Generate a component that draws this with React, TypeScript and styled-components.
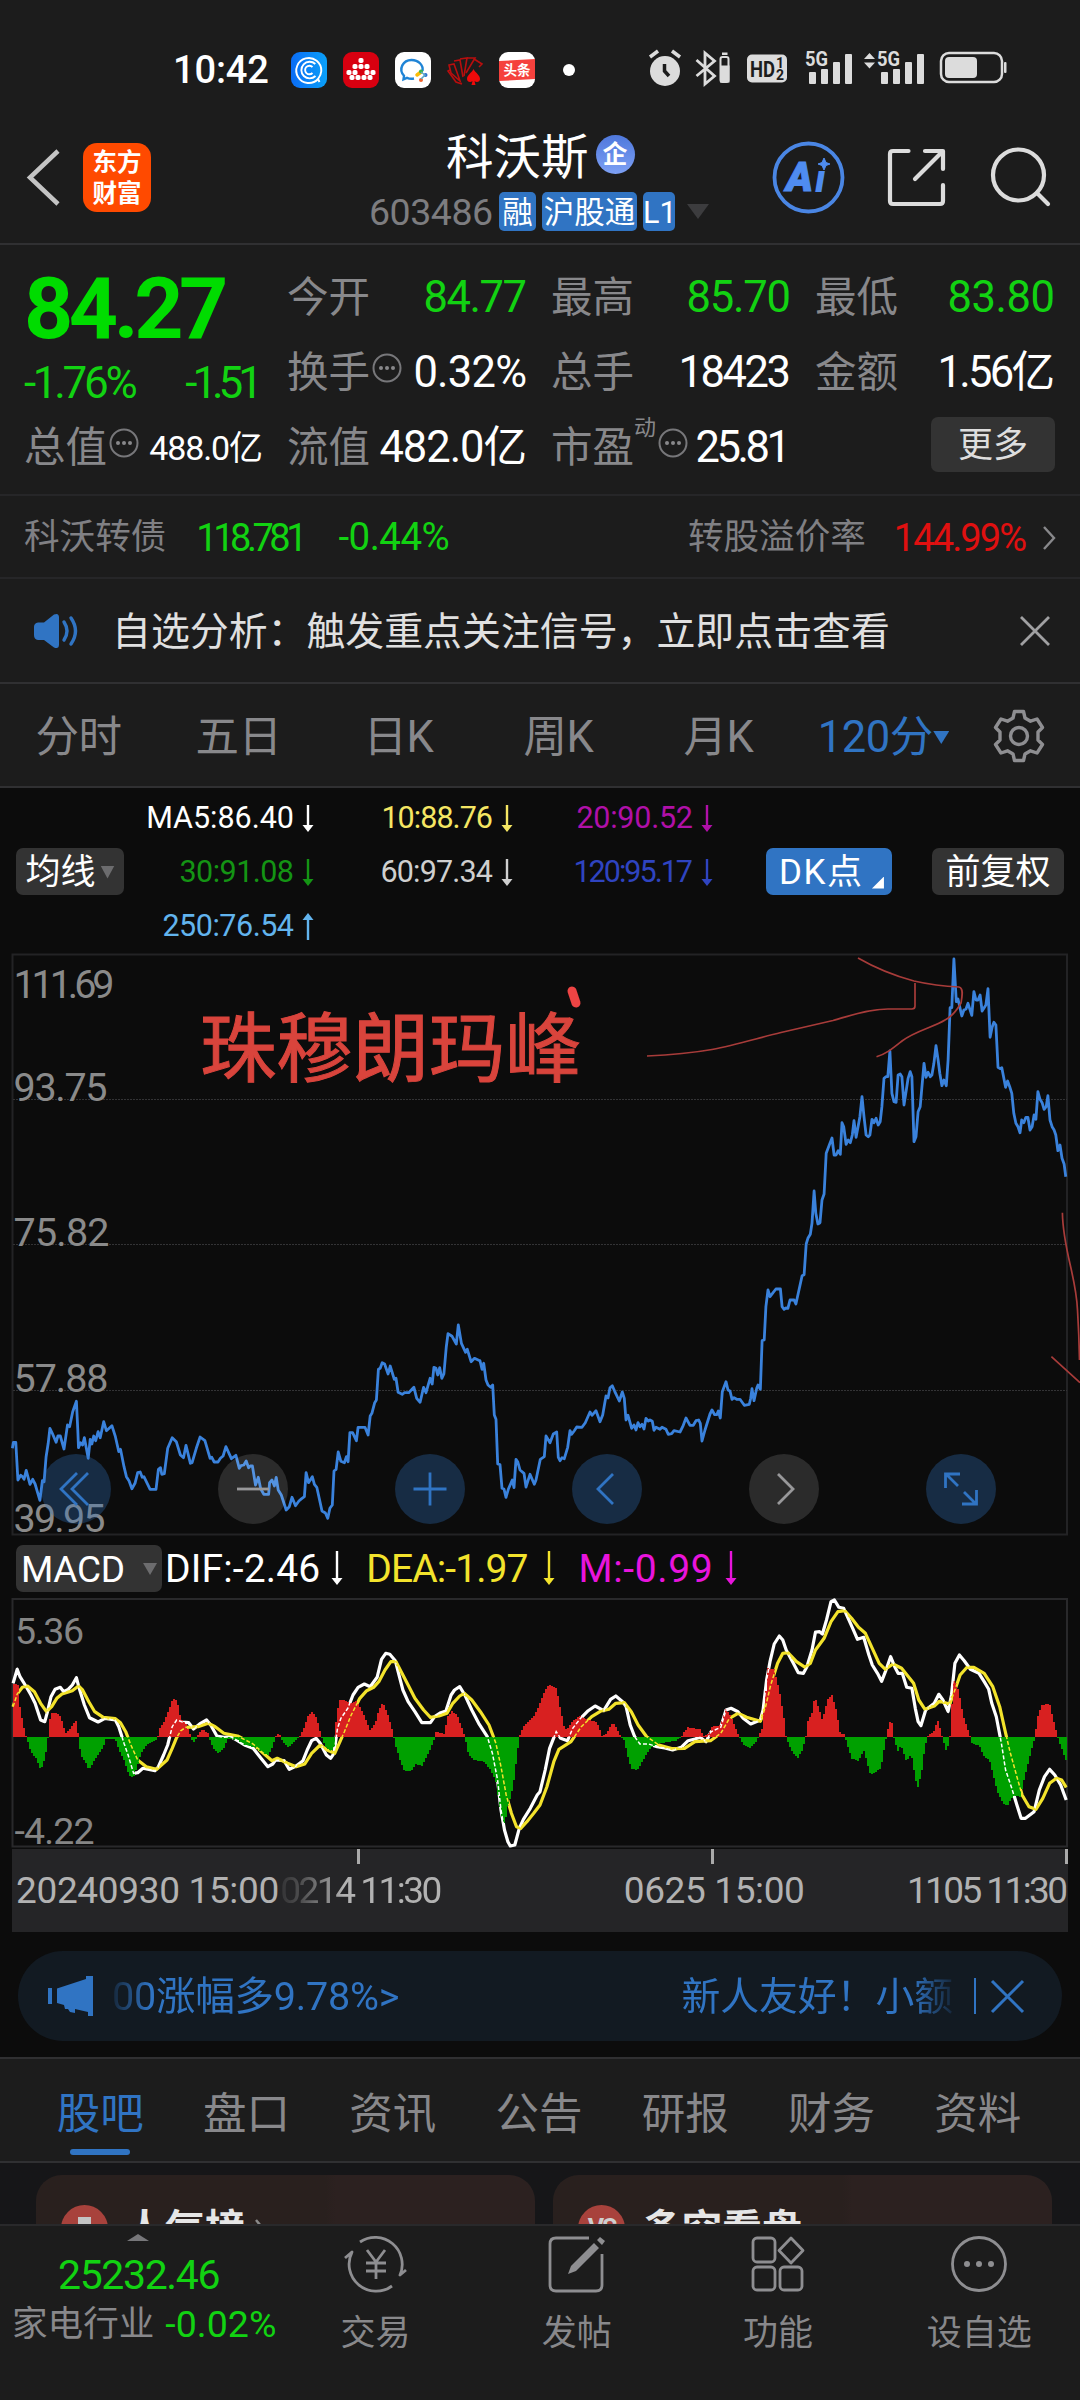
import React from "react";
import styled, { createGlobalStyle } from "styled-components";

const C = {
  bg: "#1c1c1c",
  deep: "#0c0c0c",
  line: "#303032",
  grey: "#88888b",
  blue: "#3074c3",
  green: "#12d212",
  red: "#e01010",
  chip: "#333333",
};

const FONT = `Roboto, "Noto Sans CJK SC", sans-serif`;

const Global = createGlobalStyle`
  * { box-sizing: border-box; }
  body { margin: 0; background: ${C.bg}; font-family: ${FONT}; line-height: 1; }
  svg { display: block; flex: none; overflow: visible; }
`;

/* Advance widths in em, used to track figures to a fixed column width. */
const ADV: Record<string, number> = {
  ".": 0.263, "-": 0.276, "%": 0.732, ":": 0.242, " ": 0.248, M: 0.8735, A: 0.652,
  D: 0.656, I: 0.272, F: 0.553, E: 0.568, C: 0.651, K: 0.627, L: 0.538, ">": 0.522,
};
const natural = (s: string) =>
  [...s].reduce((n, ch) => n + (ch > "\u2e80" ? 1 : ADV[ch] ?? 0.5615), 0);
const track = (s: string, size: number, width: number) =>
  s.length > 1 ? (width + size * 0.08 - natural(s) * size) / (s.length - 1) : 0;

const Tracked = styled.span<{ $size: number; $ls: number; $color: string; $weight: number }>`
  display: block;
  flex: none;
  white-space: nowrap;
  font-size: ${(p) => p.$size}px;
  font-weight: ${(p) => p.$weight};
  color: ${(p) => p.$color};
  letter-spacing: ${(p) => p.$ls}px;
  margin-right: ${(p) => -p.$ls}px;
`;
const Num = ({ t, size, w, color = "#fff", weight = 400 }: { t: string; size: number; w: number; color?: string; weight?: number }) => (
  <Tracked $size={size} $ls={track(t, size, w)} $color={color} $weight={weight}>{t}</Tracked>
);

const Page = styled.main`
  width: 1080px;
  height: 2400px;
  overflow: hidden;
  display: flex;
  flex-direction: column;
  background: ${C.deep};
`;

/* ---------- status bar ---------- */
const StatusBar = styled.div`
  height: 138px;
  display: flex;
  align-items: center;
  padding: 2px 73px 0 173px;
  background: ${C.bg};
`;
const AppIcons = styled.div`
  display: flex;
  gap: 16px;
  margin-left: 22px;
  align-items: center;
`;
const Tray = styled.div`
  margin-left: auto;
`;

const StatusIcons = () => (
  <AppIcons>
    <svg width="36" height="36" viewBox="0 0 36 36">
      <defs><linearGradient id="cq"><stop offset="0" stopColor="#0a6cf5" /><stop offset="1" stopColor="#0aa0f8" /></linearGradient></defs>
      <rect width="36" height="36" rx="9" fill="url(#cq)" />
      <g fill="none" stroke="#fff" strokeWidth="1.9">
        <path d="M27 27A12.5 12.5 0 1 1 30.3 19c-.1 3-1.5 5.500-3.300 8l1.500 3" />
        <path d="M24.500 24A8.300 8.300 0 1 1 24.300 12" />
        <path d="M21.500 21A4.300 4.300 0 1 1 21.500 15" />
      </g>
    </svg>
    <svg width="36" height="36" viewBox="0 0 36 36">
      <rect width="36" height="36" rx="9" fill="#d80010" />
      <g fill="#fff">
        {[[15.500, 6], [9.500, 12], [21.500, 12], [15.500, 12], [3.500, 18], [9.500, 18], [21.500, 18], [27.500, 18], [6.500, 24], [12.500, 24], [18.500, 24], [24.500, 24]].map(([x, y], i) => (
          <rect key={i} x={x} y={y - (y === 24 ? 1 : 0)} width="5" height="5" rx="1.800" />
        ))}
      </g>
    </svg>
    <svg width="36" height="36" viewBox="0 0 36 36">
      <rect width="36" height="36" rx="9" fill="#fff" />
      <path d="M19 26.500c-3 .6-5.500 0-7-.7l-3.500 1.500.5-3.500C3 17 8 8 16.500 8c7 0 12 5 11 11" fill="none" stroke="#1f84d6" strokeWidth="2.400" />
      <path d="M22 23l4-3" stroke="#fbbc08" strokeWidth="3.500" strokeLinecap="round" />
      <circle cx="26" cy="19.500" r="2" fill="#3bb44a" /><circle cx="30.500" cy="23" r="2" fill="#2a6fd0" />
      <circle cx="26" cy="28" r="2" fill="#f0602a" /><path d="M26 20l4 3-4 4" fill="none" stroke="#58a8c8" strokeWidth="1.500" />
    </svg>
    <svg width="36" height="36" viewBox="0 0 36 36">
      <g fill="none" stroke="#b80e0e" strokeWidth="1.600">
        <path d="M3 18l-2 1 8 11 6 2" /><path d="M2 13l5-1 5 14 1 3-9-8z" /><path d="M7 9l6-1 3 17" /><path d="M13 7l7-1-3 18" /><path d="M20 6l8 0-9 15" /><path d="M27 7l8 5-3 3" />
      </g>
      <path d="M26.500 17c2 4 6.500 6 6.500 10 0 3-3.500 4-5.500 2l1 4h-4l1-4c-2 2-5.500 1-5.500-2 0-4 4.500-6 6.500-10z" fill="#f00a0a" />
    </svg>
    <svg width="36" height="36" viewBox="0 0 36 36">
      <rect width="36" height="36" rx="9" fill="#fff" />
      <path d="M0 9L36 7V27L0 29z" fill="#f5413d" />
      <text x="4.500" y="23" fontSize="13.500" fontWeight="700" fill="#fff" fontFamily={FONT}>头条</text>
    </svg>
    <svg width="36" height="36" viewBox="0 0 36 36"><circle cx="18" cy="18" r="6" fill="#fff" /></svg>
  </AppIcons>
);

const Signal = ({ x }: { x: number }) => (
  <g transform={`translate(${x} 0)`}>
    <text x="-1" y="16" fontSize="20" fontWeight="700" textLength="23" lengthAdjust="spacingAndGlyphs" fontFamily={FONT}>5G</text>
    <rect x="3" y="22" width="7" height="12" rx="1" /><rect x="15" y="19" width="7" height="15" rx="1" />
    <rect x="27" y="12" width="7" height="22" rx="1" /><rect x="39" y="4" width="7" height="30" rx="1" />
  </g>
);
const TrayIcons = () => (
  <svg width="360" height="40" viewBox="647 0 360 40" fill="#dcdcdc">
    <circle cx="665" cy="21" r="15" />
    <path d="M650 7l8-6M680 7l-8-6" stroke="#dcdcdc" strokeWidth="3.500" />
    <path d="M664.500 14v7l4.500 5" fill="none" stroke="#1c1c1c" strokeWidth="3.500" />
    <path d="M696.500 10l18 16-9.500 8V3l9.500 8-18 15" fill="none" stroke="#dcdcdc" strokeWidth="2.800" />
    <rect x="720.500" y="7" width="8" height="25" rx="2" fill="none" stroke="#dcdcdc" strokeWidth="2" />
    <rect x="720" y="15.500" width="9.500" height="17" /><rect x="722" y="2.500" width="5.500" height="2.500" />
    <rect x="747" y="4.500" width="40" height="28" rx="5" />
    <g fill="#1c1c1c" fontFamily={FONT} fontWeight="700">
      <text x="750" y="26.500" fontSize="22" textLength="25" lengthAdjust="spacingAndGlyphs">HD</text>
      <text x="776" y="17.500" fontSize="14">1</text><text x="776" y="29.500" fontSize="14">2</text>
    </g>
    <Signal x={806} />
    <path d="M864 9l5.500-6 5.500 6zM864 12.500l5.500 6 5.500-6z" />
    <Signal x={878} />
    <rect x="941" y="3" width="61" height="29" rx="8" fill="none" stroke="#dcdcdc" strokeWidth="2.500" />
    <rect x="945" y="7" width="32" height="21" rx="4" /><rect x="1004" y="12" width="2.500" height="11" rx="1" />
  </svg>
);

/* ---------- title bar ---------- */
const TitleBar = styled.header`
  height: 107px;
  display: flex;
  background: ${C.bg};
  border-bottom: 2px solid ${C.line};
  padding: 0 28px 0 26px;
`;
const Lead = styled.div`
  width: 343px;
  display: flex;
  gap: 23px;
  padding-top: 5px;
`;
const BackArrow = styled.svg`
  margin-top: 5px;
`;
const Logo = styled.div`
  width: 68px;
  height: 69px;
  border-radius: 14px;
  background: #ff4a00;
  color: #fff;
  font-size: 24.5px;
  font-weight: 700;
  line-height: 31px;
  padding-top: 4px;
  text-align: center;
`;
const StockId = styled.div`
  width: 340px;
  display: flex;
  flex-direction: column;
`;
const StockName = styled.h1`
  margin: 0;
  padding: 3px 0 0 77px;
  height: 39px;
  display: flex;
  align-items: center;
  gap: 7px;
  font-size: 47.5px;
  font-weight: 400;
  color: #fff;
`;
const CorpBadge = styled.span`
  width: 39px;
  height: 39px;
  border-radius: 50%;
  background: linear-gradient(#4f78dc, #7da0f4);
  font-size: 25px;
  font-weight: 700;
  display: flex;
  align-items: center;
  justify-content: center;
  margin-top: -9px;
`;
const CodeRow = styled.div`
  display: flex;
  align-items: center;
  gap: 6px;
  margin-top: 15px;
  height: 39px;
`;
const Code = styled.div`
  padding-top: 3px;
`;
const Tag = styled.span<{ $w: number }>`
  width: ${(p) => p.$w}px;
  height: 39px;
  border-radius: 5px;
  background: ${C.blue};
  color: #fff;
  font-size: 30.5px;
  line-height: 41px;
  text-align: center;
  white-space: nowrap;
`;
const Caret = styled.span<{ $w: number; $h: number; $c: string }>`
  display: block;
  flex: none;
  width: ${(p) => p.$w}px;
  height: ${(p) => p.$h}px;
  background: ${(p) => p.$c};
  clip-path: polygon(0 0, 100% 0, 50% 100%);
`;
const HeadTools = styled.div`
  margin-left: auto;
`;

/* ---------- quote grid ---------- */
const Quote = styled.section`
  height: 251px;
  padding: 15px 24px 0 24px;
  display: grid;
  grid-template-columns: 239px 240px 240px 240px;
  grid-auto-rows: 75px;
  column-gap: 24px;
  background: ${C.bg};
  border-bottom: 2px solid #262628;
`;
const PriceBlock = styled.div`
  grid-row: span 2;
  display: flex;
  flex-direction: column;
  justify-content: flex-start;
  padding-top: 6px;
`;
const Change = styled.div`
  display: flex;
  justify-content: space-between;
  margin-top: 9px;
`;
const Cell = styled.div`
  display: flex;
  align-items: center;
`;
const Label = styled.span<{ $sup?: boolean }>`
  font-size: ${(p) => (p.$sup ? 22 : 41.5)}px;
  color: ${C.grey};
  white-space: nowrap;
  align-self: ${(p) => (p.$sup ? "flex-start" : "auto")};
  margin-top: ${(p) => (p.$sup ? 7 : 1)}px;
`;
const Push = styled.span`
  margin-left: auto;
`;
const MoreButton = styled.button`
  margin: 0 0 6px auto;
  width: 124px;
  height: 55px;
  padding: 2px 0 0;
  border: 0;
  border-radius: 7px;
  background: ${C.chip};
  color: #dedede;
  font: 35px/1 ${FONT};
`;
const Hint = () => (
  <svg width="32" height="40" viewBox="0 0 32 40">
    <circle cx="17" cy="15" r="13.500" fill="none" stroke="#77777a" strokeWidth="2" />
    <g fill="#88888b"><circle cx="11" cy="15" r="2" /><circle cx="17" cy="15" r="2" /><circle cx="23" cy="15" r="2" /></g>
  </svg>
);

/* ---------- bond / notice / periods ---------- */
const Bond = styled.section`
  height: 83px;
  padding: 2px 24px 0 24px;
  display: flex;
  align-items: center;
  background: ${C.bg};
  border-bottom: 2px solid #262628;
`;
const BondLabel = styled.span`
  font-size: 35.6px;
  color: #808084;
`;
const Gap = styled.span<{ $w: number }>`
  flex: none;
  width: ${(p) => p.$w}px;
`;
const Notice = styled.section`
  height: 105px;
  padding: 0 30px 0 33px;
  display: flex;
  align-items: center;
  background: ${C.bg};
  border-bottom: 2px solid ${C.line};
`;
const NoticeText = styled.p`
  margin: 3px 0 0 33px;
  font-size: 38.9px;
  color: #e0e0e0;
  flex: 1;
`;
const Periods = styled.nav`
  height: 104px;
  display: flex;
  align-items: center;
  padding-top: 1px;
  background: ${C.bg};
  border-bottom: 2px solid ${C.line};
`;
const Period = styled.span<{ $on?: boolean }>`
  width: 160px;
  display: flex;
  align-items: center;
  justify-content: center;
  gap: ${(p) => (p.$on ? 0 : 7)}px;
  padding: 4px ${(p) => (p.$on ? 0 : 3)}px 0 ${(p) => (p.$on ? 7 : 0)}px;
  font-size: 43.5px;
  letter-spacing: -0.5px;
  color: ${(p) => (p.$on ? C.blue : C.grey)};
`;

/* ---------- indicator header ---------- */
const Indicators = styled.section`
  height: 165px;
  display: flex;
  align-items: center;
  padding: 1px 16px 0;
`;
const Chip = styled.button<{ $w: number; $blue?: boolean }>`
  flex: none;
  width: ${(p) => p.$w}px;
  height: 47px;
  padding: 2px 0 0;
  border: 0;
  border-radius: 7px;
  background: ${(p) => (p.$blue ? C.blue : C.chip)};
  color: #fff;
  font: 35px/1 ${FONT};
  display: flex;
  align-items: center;
  justify-content: center;
  gap: 5px;
`;
const Corner = styled.span`
  width: 12px;
  height: 12px;
  background: #fff;
  clip-path: polygon(100% 0, 100% 100%, 0 100%);
  align-self: flex-end;
  margin: 0 0 6px 5px;
`;
const MaGrid = styled.div`
  display: grid;
  grid-template-columns: 190px 199px 200px;
  grid-auto-rows: 54px;
  padding-top: 2px;
`;
const Ma = styled.div`
  display: flex;
  align-items: center;
  justify-content: flex-end;
  gap: 8px;
`;
const Arrow = ({ c, up, h = 27 }: { c: string; up?: boolean; h?: number }) => (
  <svg width="12" height={h} viewBox={`0 0 12 ${h}`}>
    <g transform={up ? `rotate(180 6 ${h / 2})` : undefined} fill={c}>
      <rect x="4.800" y="0" width="2.400" height={h - 4} />
      <path d={`M.5 ${h - 7}H11.500L6 ${h}z`} />
    </g>
  </svg>
);

const mas: [string, number, string, boolean?][] = [
  ["MA5:86.40", 145, "#ffffff"], ["10:88.76", 109, "#f5e663"], ["20:90.52", 114, "#b010a8"],
  ["30:91.08", 112, "#149414"], ["60:97.34", 110, "#cfcfcf"], ["120:95.17", 117, "#2f44c0"],
  ["250:76.54", 129, "#62b4ee", true],
];

/* ---------- price chart ---------- */
const ChartBox = styled.section`
  position: relative;
  height: 583px;
`;
const ChartButtons = styled.div`
  position: absolute;
  left: 41px;
  top: 501px;
  display: flex;
  gap: 107px;
`;
const RoundButton = styled.button<{ $grey?: boolean }>`
  width: 70px;
  height: 70px;
  border: 0;
  padding: 0;
  border-radius: 50%;
  display: flex;
  align-items: center;
  justify-content: center;
  background: ${(p) => (p.$grey ? "rgba(255,255,255,.13)" : "rgba(48,116,195,.31)")};
  color: ${(p) => (p.$grey ? "#98989a" : "#3074c3")};
`;

const priceA =
  "36,745 39,727 46,727 52,840 60,826 65,830 70,838 76,811 87,853 95,838 102,852 116,901 123,842 128,845 134,770 140,730 145,685 152,700 163,727 168,708 175,708 186,747 196,675 202,680 211,635 222,604 226,690 228,743 234,728 240,735 245,713 256,775 262,718 267,732 272,708 278,722 285,695 291,713 301,665 309,692 325,677 335,710 345,755 350,748 360,800 367,830 375,843 383,866 392,850 400,818 407,816 413,832 418,830 436,868 453,868 460,808 466,803 470,823 477,821 487,745 500,713 512,725 524,765 533,773 540,736 553,790 558,788 570,745 581,711 595,722 610,775 615,772 622,786 633,786 640,775 648,768 656,740 672,776 685,766 695,805 700,797 708,795 715,783 722,803 727,798 733,798 742,855 750,832 757,866 766,883 780,883 783,848 790,840 797,858 802,832 808,870 817,885 831,930 840,920 848,892 858,917 868,903 876,896 884,890 889,818 896,848 907,830 913,853 920,862 935,933 945,939 952,955 958,925 965,915 970,813 976,808 982,756 990,784 1000,788 1006,770 1011,785 1016,698 1024,698 1035,722 1040,682 1060,682 1069,705 1075,648 1080,640 1088,608 1093,600 1099,508 1104,505 1110,488 1117,492 1127,522 1133,498 1145,538 1150,535 1156,577 1168,583 1175,578 1187,578 1202,562 1210,595 1220,607 1230,562 1237,578 1249,535 1255,552 1260,502 1266,505 1271,525 1277,503 1283,535 1289,522 1296,440 1301,401 1313,409 1325,432 1331,375 1340,430 1352,457 1357,448 1368,485 1378,475 1393,482";
const priceB =
  "0,62 6,88 11,70 18,120 24,135 32,142 38,135 43,225 48,238 53,372 60,374 66,445 72,447 78,472 85,448 97,420 102,443 108,358 113,365 120,390 132,400 138,441 150,403 163,433 168,420 181,358 193,350 198,288 210,308 220,282 230,276 235,352 240,362 246,353 253,356 263,322 270,272 275,283 283,272 290,261 306,262 316,248 330,216 336,226 348,212 360,245 368,225 378,168 384,174 390,143 397,137 404,154 418,183 427,156 433,175 438,240 444,226 455,265 462,255 468,270 474,248 480,260 486,253 492,267 498,235 505,243 510,240 517,244 522,271 528,262 540,268 546,262 558,268 565,283 575,281 582,272 600,276 608,260 618,234 630,256 640,256 648,242 656,240 661,250 666,303 675,270 690,222 696,210 704,224 710,224 715,213 721,234 727,155 738,125 744,150 750,153 756,178 762,173 770,178 780,178 793,196 808,193 812,175 816,146 822,182 830,145 834,135 841,148";
const priceC =
  "640,1345 645,1202 651,1200 656,1100 662,1050 668,1070 685,1047 698,1047 703,1100 709,1108 714,1104 720,1105 726,1080 738,1080 743,1092 761,1007 767,1004 773,912 778,895 785,883 790,850 796,753 801,820 807,852 813,848 819,780 825,762 831,640 840,615 848,594 854,645 860,645 866,632 872,643 877,548 882,560 889,613 895,600 901,608 907,585 912,542 918,592 929,530 935,470 941,530 947,585 953,590 958,585 964,538 970,548 976,535 982,555 988,545 993,500 999,415 1005,410 1010,410 1016,333 1022,460 1028,485 1034,487 1040,405 1046,402 1051,410 1057,495 1069,415 1075,395 1080,410 1086,605 1092,590 1098,515 1104,500 1115,370 1121,412 1127,397 1133,410 1138,405 1144,370 1150,317 1156,360 1161,400 1167,437 1173,420 1180,437 1185,360 1191,203 1196,203 1202,57 1209,185 1214,177 1225,228 1231,210 1237,207 1243,190 1254,226 1260,155 1266,180 1272,180 1278,165 1284,213 1295,195 1301,146 1307,292 1313,262 1318,247 1324,255 1330,382 1336,386 1341,383 1352,442 1358,423 1364,440 1370,460 1376,520 1382,550 1388,560 1394,578 1399,540 1405,548 1411,532 1417,532 1423,570 1429,560 1435,525 1440,538 1446,455 1452,478 1458,488 1464,508 1470,500 1475,467 1481,540 1487,560 1493,570 1498,585 1504,632 1510,615 1516,655 1522,672 1527,710";

type Pt = [number, number];
const K = 1 / 2.904;
const pts = (s: string, x0: number, y0: number, kx: number): Pt[] =>
  s.split(" ").map((p) => {
    const [x, y] = p.split(",").map(Number);
    return [x * kx + x0, y / 3 + y0];
  });
const poly = (p: Pt[]) => p.map(([x, y]) => `${x.toFixed(1)},${y.toFixed(1)}`).join(" ");
const price = poly([...pts(priceA, 0, 1200, K), ...pts(priceB, 480, 1340, 1 / 3), ...pts(priceC, 540, 940, K)]);

const axisLabels: [string, number, number][] = [
  ["111.69", 997.5, 101], ["93.75", 1100.5, 94], ["75.82", 1245.5, 96], ["57.88", 1391.5, 95], ["39.95", 1532, 92],
];

const PriceChart = () => (
  <svg width="1080" height="583" viewBox="0 953 1080 583">
    <rect x="12.500" y="954.500" width="1054.500" height="580" fill="none" stroke="#232325" strokeWidth="2" />
    <g stroke="#333335" strokeWidth="1" strokeDasharray="2 1">
      <path d="M13 1099.500H1067M13 1244.500H1067M13 1390.500H1067" />
    </g>
    <g fill="#8a8a8a" fontFamily={FONT} fontSize="39.500">
      {axisLabels.map(([t, y, w]) => <text key={t} x="13.500" y={y} textLength={w}>{t}</text>)}
    </g>
    <polyline points={price} fill="none" stroke="#3a82dc" strokeWidth="2.800" strokeLinejoin="round" />
    <text x="200" y="1076" fontSize="76.300" fill="#d9443c" stroke="#d9443c" strokeWidth="1" fontFamily={FONT}>珠穆朗玛峰</text>
    <path d="M572 991L576 1003" stroke="#ee4444" strokeWidth="9" strokeLinecap="round" />
    <g fill="none" stroke="#a83c3a" strokeWidth="1.700">
      <path d="M647 1056C670 1055 692 1053 712 1049.500C736 1045 758 1038 781 1032.500L833 1020.500C850 1016 868 1009 888 1009H912Q915 1009 915 1006V983" />
      <path d="M858 958Q884 973 914 981Q936 986 959 987C964 988 962 997 961 1003C957 1010 953 1016 945 1020C934 1027 915 1031 902 1041C892 1049 886 1054 876.500 1056.700" />
      <path d="M1062.400 1212.700C1063 1250 1076 1275 1077.500 1310Q1079 1335 1079.500 1360M1051.400 1356.700L1080 1382.700" />
    </g>
  </svg>
);

const Stroke = ({ d, size = 34 }: { d: string; size?: number }) => (
  <svg width={size} height={size} viewBox="0 0 34 34" fill="none" stroke="currentColor" strokeWidth="2.800"><path d={d} /></svg>
);

/* ---------- MACD ---------- */
const MacdHead = styled.div`
  height: 62px;
  display: flex;
  align-items: center;
  padding: 2px 0 0 16px;
`;
const MacdValue = styled.div`
  display: flex;
  padding-top: 3px;
`;
const difA =
  "38,430 50,388 58,410 75,438 90,465 102,490 118,540 130,545 138,515 148,470 160,448 175,442 185,455 198,448 210,435 222,413 230,445 245,495 260,533 285,546 305,535 335,540 345,560 360,610 372,645 388,700 400,698 415,685 450,692 460,680 475,645 487,615 500,560 513,540 530,546 548,548 562,567 580,552 600,540 612,555 630,588 650,592 670,590 690,602 710,615 735,625 758,655 778,680 792,672 800,660 825,662 840,688 860,678 880,662 892,630 905,602 918,595 930,610 948,645 960,655 970,640 980,565 990,535 1010,505 1025,465 1040,442 1058,432 1075,440 1095,412 1108,358 1120,340 1132,343 1148,362 1160,410 1170,450 1185,485 1205,515 1225,548 1250,548 1262,530 1280,518 1295,513 1310,465 1320,450 1335,440 1350,465 1370,510 1390,550 1415,590 1430,640 1445,720 1455,810 1465,870 1475,905 1482,918 1495,915 1508,865 1520,838 1540,805 1560,765";
const difB =
  "0,755 15,690 28,625 47,575 60,595 80,602 95,565 118,535 140,512 160,498 185,512 205,478 220,468 240,485 250,500 262,555 275,590 290,612 315,612 340,620 362,624 385,630 410,622 430,602 450,597 465,592 482,605 497,575 525,562 540,510 555,505 575,515 590,535 612,552 640,540 648,510 658,420 668,365 680,312 695,288 705,300 715,330 735,368 750,398 765,400 775,380 790,330 800,276 812,275 820,282 832,240 845,185 855,180 868,202 882,205 895,235 908,265 922,298 940,292 955,345 965,375 980,400 992,424 1003,395 1018,350 1030,380 1040,400 1052,400 1065,442 1080,445 1090,505 1098,545 1106,557 1120,510 1145,490 1158,463 1170,480 1185,514 1195,465 1205,370 1218,345 1232,362 1250,388 1275,400 1290,425 1303,448 1312,490 1325,530 1340,610 1352,690 1370,745 1385,795 1397,835 1410,835 1435,815 1450,750 1465,710 1480,688 1495,705 1512,735 1528,780";
const deaA =
  "38,500 50,462 65,442 80,438 100,455 118,490 135,515 150,500 165,475 180,462 210,452 228,438 240,450 258,485 275,515 300,532 335,536 350,548 365,575 380,615 400,660 425,680 455,688 485,660 500,625 512,595 525,572 540,562 575,560 605,550 625,560 650,580 690,588 735,612 760,635 790,662 805,655 835,670 860,680 885,672 905,640 930,615 950,630 972,640 985,610 1000,575 1020,525 1045,475 1065,452 1085,442 1100,425 1118,390 1135,365 1150,365 1165,395 1185,435 1205,475 1230,510 1250,532 1275,528 1298,520 1315,490 1335,468 1348,460 1370,480 1395,515 1420,555 1440,610 1455,680 1470,765 1485,820 1500,860 1512,865 1530,845 1550,820";
const deaB =
  "0,795 20,740 40,665 55,628 90,605 120,560 150,530 175,514 200,508 220,490 245,488 265,515 285,555 310,590 345,615 385,626 420,625 450,605 495,602 525,580 550,535 575,520 600,532 640,544 655,500 670,435 690,370 705,340 720,338 745,365 770,382 785,370 800,330 825,295 845,245 865,215 885,212 905,235 925,262 945,280 965,325 985,370 1003,388 1025,372 1050,385 1085,430 1100,480 1118,508 1145,498 1160,484 1190,492 1205,450 1220,405 1240,382 1260,382 1290,400 1315,440 1335,500 1350,570 1365,635 1385,710 1400,765 1420,800 1440,808 1460,775 1480,730 1500,715 1515,720 1528,742";
const histA =
  "36,432 52,432 58,500 66,545 75,588 78,596 90,635 105,655 112,672 118,690 125,675 133,640 139,600 143,545 150,520 165,518 175,530 182,550 190,580 200,570 215,550 224,540 227,585 229,615 238,650 250,668 258,692 270,668 285,645 300,620 308,596 335,598 345,628 362,665 375,708 388,712 398,680 410,640 425,615 445,605 458,598 460,572 475,548 490,510 503,474 515,485 525,535 540,552 550,575 555,596 563,606 570,596 577,580 590,568 605,580 609,598 620,625 635,640 650,625 662,596 690,600 710,615 740,622 765,640 780,645 790,625 800,592 806,580 815,588 820,605 838,624 850,610 862,596 873,585 885,560 895,525 908,516 920,535 928,570 935,592 945,620 960,635 970,620 974,560 985,480 1000,480 1018,490 1035,482 1050,510 1065,545 1075,572 1090,550 1100,510 1112,486 1125,520 1135,555 1144,590 1150,620 1165,670 1175,695 1195,692 1208,672 1225,678 1240,650 1255,615 1262,596 1265,575 1290,582 1300,530 1312,514 1328,525 1340,560 1350,590 1360,640 1375,660 1405,665 1425,690 1440,725 1455,820 1465,855 1475,800 1490,740 1500,660 1508,592 1520,560 1550,530";
const histB =
  "0,490 10,462 20,440 30,435 48,445 58,500 70,560 78,572 90,548 115,528 140,540 165,545 180,588 190,585 212,546 225,570 235,592 245,602 255,650 265,685 283,690 300,660 320,625 345,610 395,602 410,592 418,575 430,562 465,568 475,588 492,580 500,560 525,555 540,508 555,530 570,570 580,592 590,612 610,625 628,605 635,588 645,565 655,470 662,385 680,388 695,450 708,530 715,592 730,630 748,655 762,630 772,592 778,545 790,520 798,470 808,500 820,540 835,480 848,464 860,510 872,580 885,582 890,605 905,655 925,665 940,630 960,705 990,685 1002,610 1010,570 1020,533 1028,590 1038,635 1048,615 1065,665 1078,640 1088,700 1096,748 1108,700 1118,620 1128,585 1143,578 1155,540 1168,590 1180,632 1190,600 1195,510 1203,415 1215,450 1230,530 1248,585 1255,612 1275,615 1290,650 1305,660 1315,700 1330,760 1345,790 1357,797 1375,768 1395,770 1410,700 1425,640 1437,592 1445,530 1458,495 1480,492 1490,535 1503,590 1515,625 1530,668";

const both = (a: string, b: string) => [...pts(a, 0, 1540, K), ...pts(b, 540, 1540, K)];
const dif = poly(both(difA, difB));
const dea = poly(both(deaA, deaB));
const hist = both(histA, histB);
const ZERO = 1737;
const bars: { x: number; y: number }[] = [];
for (let x = 13, i = 0; x < 1066; x += 2) {
  while (i < hist.length - 2 && hist[i + 1][0] < x + 1) i++;
  const [x0, y0] = hist[i];
  const [x1, y1] = hist[i + 1];
  bars.push({ x, y: Math.round(y0 + ((x + 1 - x0) / (x1 - x0)) * (y1 - y0)) });
}

const MacdChart = () => (
  <svg width="1080" height="251" viewBox="0 1598 1080 251">
    <rect x="12.500" y="1599" width="1054.500" height="247.500" fill="none" stroke="#29292b" strokeWidth="2" />
    <g fill="#858585" fontFamily={FONT} fontSize="37.500">
      <text x="15" y="1644" textLength="69">5.36</text>
      <text x="14.500" y="1843.500" textLength="80">-4.22</text>
    </g>
    <g fill="none" strokeWidth="3.200" strokeLinejoin="round">
      <polyline points={dif} stroke="#fff" />
      <polyline points={dea} stroke="#f3e32c" />
    </g>
    <g shapeRendering="crispEdges">
      {bars.map((b) => (
        <rect key={b.x} x={b.x} width="2" y={Math.min(b.y, ZERO)} height={Math.max(1, Math.abs(b.y - ZERO))} fill={b.y < ZERO ? "#d82020" : "#00a000"} />
      ))}
    </g>
    <g fill="none" strokeWidth="1.500" strokeDasharray="4 2">
      <polyline points={dif} stroke="#fff" />
      <polyline points={dea} stroke="#f3e32c" />
    </g>
  </svg>
);

const TimeAxis = styled.div`
  margin: 0 12px 0 12px;
  height: 83px;
  background: #252527;
  display: flex;
  flex-direction: column;
`;
const Ticks = styled.div`
  display: flex;
  justify-content: space-between;
  padding-left: 345px;
`;
const Tick = styled.i`
  width: 3px;
  height: 15px;
  background: #aaaaaa;
`;
const TimeLabels = styled.div`
  display: flex;
  padding: 8px 0 0 4px;
`;
const FadeIn = styled.span`
  flex: none;
  mask-image: linear-gradient(90deg, rgba(0, 0, 0, 0.1), rgba(0, 0, 0, 0.3) 22px, #000 64px);
`;

/* ---------- promo ---------- */
const PromoWrap = styled.div`
  height: 127px;
  padding: 19px 18px 0;
  border-bottom: 2px solid ${C.line};
`;
const Promo = styled.div`
  height: 90px;
  border-radius: 45px;
  background: #121a22;
  color: ${C.blue};
  display: flex;
  align-items: center;
  padding: 0 38px 0 30px;
`;
const PromoText = styled.div<{ $fade: "left" | "right" }>`
  flex: none;
  white-space: nowrap;
  font-size: 38.8px;
  padding: 8px 0 6px;
  mask-image: ${(p) => (p.$fade === "left"
    ? "linear-gradient(90deg, rgba(0,0,0,.15), #000 38px)"
    : "linear-gradient(270deg, rgba(0,0,0,.15), #000 42px)")};
`;
const Divider = styled.i`
  width: 2px;
  height: 36px;
  background: ${C.blue};
  margin: 0 15px 0 21px;
`;

/* ---------- content tabs ---------- */
const Tabs = styled.nav`
  height: 104px;
  padding: 0 29px 0 27px;
  background: ${C.bg};
  border-bottom: 2px solid ${C.line};
  display: flex;
`;
const Tab = styled.span<{ $on?: boolean }>`
  flex: 1;
  display: flex;
  flex-direction: column;
  align-items: center;
  padding-top: 34px;
  font-size: 43.5px;
  color: ${(p) => (p.$on ? C.blue : C.grey)};
  &::after {
    content: "";
    width: 60px;
    height: 6px;
    margin-top: 12px;
    border-radius: 3px;
    background: ${(p) => (p.$on ? C.blue : "transparent")};
  }
`;
const Feed = styled.section`
  height: 61px;
  overflow: hidden;
  background: #161618;
  padding: 12px 28px 0 36px;
  display: flex;
  gap: 18px;
`;
const Card = styled.article`
  width: 499px;
  height: 150px;
  border-radius: 26px;
  background: linear-gradient(90deg, #29201e 58%, #2c2120 60%);
  padding: 30px 25px;
  display: flex;
  gap: 17px;
  font-size: 40px;
  font-weight: 700;
  color: #e6e6e6;
`;
const CardBadge = styled.span`
  width: 47px;
  height: 47px;
  border-radius: 50%;
  background: #a8423c;
  color: #cfcfcf;
  font-size: 25px;
  letter-spacing: -2px;
  display: flex;
  align-items: center;
  justify-content: center;
`;
const CardTitle = styled.span`
  display: flex;
  gap: 10px;
  padding-top: 5px;
`;
const Podium = styled.i`
  width: 13px;
  height: 24px;
  background: #c4c4c4;
`;

/* ---------- bottom bar ---------- */
const BottomBar = styled.footer`
  height: 176px;
  background: ${C.bg};
  border-top: 2px solid #29292b;
  display: flex;
`;
const Sector = styled.div`
  width: 275px;
  flex: none;
  padding: 8px 0 0 12px;
  display: flex;
  flex-direction: column;
`;
const UpCaret = styled.i`
  width: 22px;
  height: 7px;
  margin-left: 115px;
  background: #77777a;
  clip-path: polygon(50% 0, 100% 100%, 0 100%);
`;
const SectorPrice = styled.div`
  padding: 14px 0 0 46px;
`;
const SectorLine = styled.div`
  display: flex;
  align-items: center;
  gap: 11px;
  margin-top: 10px;
  font-size: 35.6px;
  white-space: nowrap;
  color: ${C.grey};
`;
const Action = styled.button`
  flex: 1;
  padding: 8px 0 0;
  border: 0;
  background: none;
  color: ${C.grey};
  font: 35px/1 ${FONT};
  display: flex;
  flex-direction: column;
  align-items: center;
  gap: 22px;
`;
const Actions = styled.div`
  width: 805px;
  display: flex;
`;
const Ico = ({ children }: { children: React.ReactNode }) => (
  <svg width="66" height="60" viewBox="0 0 66 60" fill="none" stroke="#8e8e91" strokeWidth="2.800" strokeLinejoin="round">{children}</svg>
);

const cells: [string, string, number, string, boolean?][] = [
  ["今开", "84.77", 100, C.green], ["最高", "85.70", 101, C.green], ["最低", "83.80", 104, C.green],
  ["换手", "0.32%", 110, "#fff", true], ["总手", "18423", 109, "#fff"], ["金额", "1.56亿", 114, "#fff"],
];

const X = ({ s, c, w = 2.8 }: { s: number; c: string; w?: number }) => (
  <svg width={s} height={s} viewBox={`0 0 ${s} ${s}`} stroke={c} strokeWidth={w}><path d={`M1 1L${s - 1} ${s - 1}M${s - 1} 1L1 ${s - 1}`} /></svg>
);

export default function App() {
  return (
    <Page>
      <Global />
      <StatusBar>
        <Num t="10:42" size={38} w={91} weight={500} />
        <StatusIcons />
        <Tray><TrayIcons /></Tray>
      </StatusBar>

      <TitleBar>
        <Lead>
          <BackArrow width="34" height="60" viewBox="0 0 34 60" fill="none" stroke="#c4c4c4" strokeWidth="4.500"><path d="M32 3L4 29.500L32 56" /></BackArrow>
          <Logo>东方<br />财富</Logo>
        </Lead>
        <StockId>
          <StockName>科沃斯<CorpBadge>企</CorpBadge></StockName>
          <CodeRow>
            <Code><Num t="603486" size={37.5} w={121} color="#7d7d80" /></Code>
            <Tag $w={37}>融</Tag><Tag $w={96}>沪股通</Tag><Tag $w={32}>L1</Tag>
            <Gap $w={0} /><Caret $w={22} $h={15} $c="#3c3c3e" />
          </CodeRow>
        </StockId>
        <HeadTools>
          <svg width="284" height="80" viewBox="768 138 284 80" fill="none">
            <circle cx="808.500" cy="177.500" r="34" stroke="#4a86e4" strokeWidth="3.800" />
            <g fill="#4f8cf0" fontFamily={FONT} fontWeight="900" fontStyle="italic" fontSize="41">
              <text x="786" y="190.500" textLength="27" lengthAdjust="spacingAndGlyphs" stroke="#4f8cf0">A</text>
              <text x="815" y="192" fontSize="38">ı</text>
            </g>
            <path d="M824 158l2 4.500 4 1.500-4 1.500-2 4.500-2-4.500-4-1.500 4-1.500z" fill="#4f8cf0" stroke="#4f8cf0" />
            <g stroke="#dcdcdc" strokeWidth="4.200" strokeLinecap="round" strokeLinejoin="round">
              <path d="M908.500 151H893q-3 0-3 3v47q0 3 3 3h47q3 0 3-3v-16M925 151h18v18M942 152l-27 27" />
              <circle cx="1018.500" cy="175" r="25.500" /><path d="M1037 193l11 11" />
            </g>
          </svg>
        </HeadTools>
      </TitleBar>

      <Quote>
        <PriceBlock>
          <Num t="84.27" size={86} w={191} color="#00dc00" weight={700} />
          <Change>
            <Num t="-1.76%" size={44} w={110} color={C.green} />
            <Num t="-1.51" size={44} w={74} color={C.green} />
          </Change>
        </PriceBlock>
        {cells.map(([l, v, w, c, hint]) => (
          <Cell key={l}>
            <Label>{l}</Label>{hint && <Hint />}<Push />
            <Num t={v} size={43.5} w={w} color={c} />
          </Cell>
        ))}
        <Cell><Label>总值</Label><Hint /><Push /><Num t="488.0亿" size={34} w={111} /></Cell>
        <Cell><Label>流值</Label><Push /><Num t="482.0亿" size={43.5} w={144} /></Cell>
        <Cell><Label>市盈</Label><Label $sup>动</Label><Hint /><Push /><Num t="25.81" size={43.5} w={92} /></Cell>
        <Cell><MoreButton>更多</MoreButton></Cell>
      </Quote>

      <Bond>
        <BondLabel>科沃转债</BondLabel><Gap $w={30} />
        <Num t="118.781" size={38} w={108} color={C.green} /><Gap $w={31} />
        <Num t="-0.44%" size={38.5} w={108} color={C.green} />
        <Push />
        <BondLabel>转股溢价率</BondLabel><Gap $w={28} />
        <Num t="144.99%" size={38} w={130} color={C.red} /><Gap $w={15} />
        <svg width="14" height="24" viewBox="0 0 14 24" fill="none" stroke="#88888b" strokeWidth="2.400"><path d="M2 1L12 12L2 23" /></svg>
      </Bond>

      <Notice>
        <svg width="46" height="36" viewBox="0 0 46 36">
          <path d="M1 14q0-4 4-4.500h6L21 1.500q5-2 5 3v27q0 5-5 3L11 27H5q-4-.5-4-5z" fill={C.blue} />
          <path d="M31 9q6 9 0 18M38 5q9 13 0 26" fill="none" stroke={C.blue} strokeWidth="3.400" strokeLinecap="round" />
        </svg>
        <NoticeText>自选分析：触发重点关注信号，立即点击查看</NoticeText>
        <X s={30} c="#a0a0a2" />
      </Notice>

      <Periods>
        {["分时", "五日", "日K", "周K", "月K"].map((t) => <Period key={t}>{t}</Period>)}
        <Period $on><Num t="120分" size={43.5} w={112} color={C.blue} /><Caret $w={16} $h={13} $c={C.blue} /></Period>
        <Gap $w={32} />
        <svg width="54" height="54" viewBox="0 0 54 54" fill="none" stroke="#8e8e91" strokeWidth="3.400" strokeLinejoin="round">
          <path d="M22.500 2.500h9l1.500 6.500 5.500 3.200 6.500-2.200 5.500 8.500-4.500 4.500v8l4.500 4.500-5.500 8.500-6.500-2.200-5.500 3.200-1.500 6.500h-9L21 45l-5.500-3.200L9 44l-5.500-8.500L8 31v-8l-4.500-4.500L9 10l6.500 2.200L21 9z" />
          <circle cx="27" cy="27" r="8.500" />
        </svg>
      </Periods>

      <Indicators>
        <Chip $w={108}>均线<Caret $w={14} $h={13} $c="#6c6c6e" /></Chip>
        <MaGrid>
          {mas.map(([t, w, c, up]) => <Ma key={t}><Num t={t} size={30.5} w={w} color={c} /><Arrow c={c} up={up} /></Ma>)}
        </MaGrid>
        <Gap $w={53} />
        <Chip $w={126} $blue><Gap $w={0} /><Num t="DK点" size={35} w={80} /><Corner /></Chip>
        <Gap $w={40} />
        <Chip $w={132}>前复权</Chip>
      </Indicators>

      <ChartBox>
        <PriceChart />
        <ChartButtons>
          <RoundButton><Stroke d="M18 1L2 17L18 33M29 1L13 17L29 33" /></RoundButton>
          <RoundButton $grey><Stroke d="M1 17H33" /></RoundButton>
          <RoundButton><Stroke d="M.5 17H33.500M17 .5V33.500" /></RoundButton>
          <RoundButton><Stroke d="M23 2L8 17L23 32" /></RoundButton>
          <RoundButton $grey><Stroke d="M11 2L26 17L11 32" /></RoundButton>
          <RoundButton><Stroke d="M1.500 16V2H16M2 2L14 14M32.500 18V32H18M32 32L20 20" /></RoundButton>
        </ChartButtons>
      </ChartBox>

      <MacdHead>
        <Chip $w={146}><Num t="MACD" size={37} w={101} /><Gap $w={8} /><Caret $w={14} $h={12} $c="#6c6c6e" /></Chip>
        <Gap $w={3} />
        <MacdValue><Num t="DIF:-2.46" size={39} w={152} /></MacdValue><Gap $w={11} /><Arrow c="#fff" h={34} /><Gap $w={23} />
        <MacdValue><Num t="DEA:-1.97" size={39} w={159} color="#f3e32c" /></MacdValue><Gap $w={14} /><Arrow c="#f3e32c" h={34} /><Gap $w={24} />
        <MacdValue><Num t="M:-0.99" size={39} w={131} color="#e814dc" /></MacdValue><Gap $w={12} /><Arrow c="#e814dc" h={34} />
      </MacdHead>
      <MacdChart />

      <TimeAxis>
        <Ticks><Tick /><Tick /><Tick /></Ticks>
        <TimeLabels>
          <Num t="20240930 15:00" size={37} w={260} color="#b2b2b2" />
          <Gap $w={1} />
          <FadeIn><Num t="0214 11:30" size={37} w={159} color="#b2b2b2" /></FadeIn>
          <Push />
          <Num t="0625 15:00" size={37} w={178} color="#b2b2b2" />
          <Gap $w={102} />
          <Num t="1105 11:30" size={37} w={158} color="#b2b2b2" />
        </TimeLabels>
      </TimeAxis>

      <PromoWrap>
        <Promo>
          <svg width="46" height="40" viewBox="0 0 46 40" fill={C.blue}>
            <rect x="0" y="12" width="4" height="16" />
            <path d="M9 12.500L38 3V0h7v40h-5v-4l-13-3v4l-5-1-2-3-3 0-1-4-7-2z" />
          </svg>
          <Gap $w={18} />
          <PromoText $fade="left"><Num t="00涨幅多9.78%>" size={39.5} w={284} color={C.blue} /></PromoText>
          <Push />
          <PromoText $fade="right">新人友好！小额</PromoText>
          <Divider />
          <X s={33} c={C.blue} w={3} />
        </Promo>
      </PromoWrap>

      <Tabs>
        {["股吧", "盘口", "资讯", "公告", "研报", "财务", "资料"].map((t, i) => <Tab key={t} $on={i === 0}>{t}</Tab>)}
      </Tabs>

      <Feed>
        <Card><CardBadge><Podium /></CardBadge><CardTitle>人气榜
          <svg width="12" height="40" viewBox="0 0 12 40" fill="none" stroke="#8a8a8a" strokeWidth="2.500"><path d="M1 10L10 21L1 32" /></svg>
        </CardTitle></Card>
        <Card><CardBadge>VS</CardBadge><CardTitle>多空看盘</CardTitle></Card>
      </Feed>

      <BottomBar>
        <Sector>
          <UpCaret />
          <SectorPrice><Num t="25232.46" size={41} w={159} color={C.green} /></SectorPrice>
          <SectorLine>家电行业<Num t="-0.02%" size={37.5} w={108} color={C.green} /></SectorLine>
        </Sector>
        <Actions>
          <Action>
            <Ico>
              <path d="M17 8A27 27 0 0 1 57 41L63 36M17 8M49 52A27 27 0 0 1 9 18L2 24" />
              <path d="M24 16l9 12 9-12M33 28v17M23 29h20M23 37h20" />
            </Ico>交易
          </Action>
          <Action>
            <Ico>
              <path d="M45 4H12q-6 0-6 6v41q0 6 6 6h40q6 0 6-6V20" />
              <path d="M24 40l3-8L50 9l5 5L32 37zM53 6l3-3 5 4-3 4z" fill="#8e8e91" stroke="none" />
            </Ico>发帖
          </Action>
          <Action>
            <Ico>
              <rect x="8" y="4" width="22" height="24" rx="4" /><path d="M46 4L58 16.500L46 29L34 16.500z" />
              <rect x="8" y="33" width="22" height="23" rx="4" /><rect x="35" y="33" width="22" height="23" rx="4" />
            </Ico>功能
          </Action>
          <Action>
            <Ico>
              <circle cx="33" cy="30" r="26.500" />
              <g fill="#8e8e91" stroke="none"><circle cx="21" cy="30" r="3" /><circle cx="33" cy="30" r="3" /><circle cx="45" cy="30" r="3" /></g>
            </Ico>设自选
          </Action>
        </Actions>
      </BottomBar>
    </Page>
  );
}
